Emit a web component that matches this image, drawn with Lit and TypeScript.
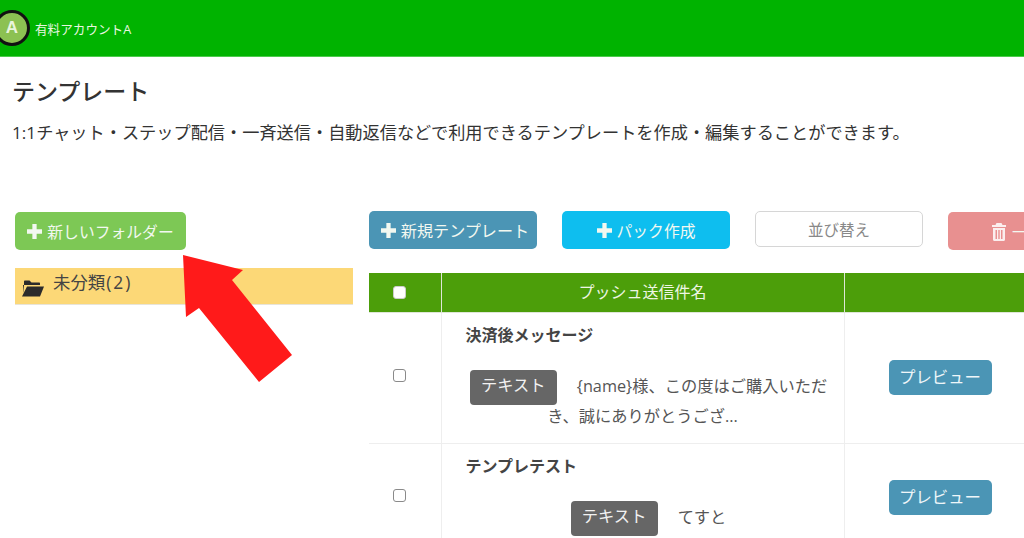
import { LitElement, html, css, svg } from "lit";
import { customElement } from "lit/decorators.js";

const plus = html`<svg class="plus" viewBox="0 0 14 14"><path d="M5 0h4v5h5v4H9v5H5V9H0V5h5z" fill="currentColor"/></svg>`;

@customElement("app-root")
export class AppRoot extends LitElement {
  static styles = css`
    :host { display: block; width: 1024px; height: 538px; overflow: hidden; position: relative; background: #fff;
      font-family: "Open Sans", "Noto Sans CJK JP", sans-serif; color: #444; }
    .top { height: 56px; background: #00b300; border-bottom: 1px solid #4ccb4c; display: flex; align-items: center; margin-left: -6px; gap: 5px; color: #e8f6e0; font-size: 12.6px; }
    .avatar { width: 30px; height: 30px; border-radius: 50%; background: #8cc152; border: 3px solid #111; color: #e9f4dc; font: bold 17px/30px "Liberation Sans", sans-serif; text-align: center; flex: none; }
    h1 { margin: 20px 0 0 12px; font-size: 23px; line-height: 28px; font-weight: 500; color: #333; }
    .desc { margin: 16px 0 0 12px; font-size: 17.2px; line-height: 24px; color: #333; white-space: nowrap; }
    .main { display: flex; margin: 67px 0 0 15px; gap: 16px; }
    .side { width: 338px; flex: none; }
    .btn { display: flex; align-items: center; justify-content: center; gap: 5px; box-sizing: border-box; border-radius: 5px; color: #f2f8f0; font-size: 15.8px; height: 38px; white-space: nowrap; flex: none; }
    .plus { width: 15px; height: 15px; flex: none; }
    .new-folder { width: 171px; background: #7dc855; }
    .folder { margin-top: 18px; height: 37px; background: #fcd877; border-bottom: 1px solid #e8e4d8; box-sizing: border-box; display: flex; align-items: center; font-size: 17.4px; padding: 0 0 9px 6px; gap: 8px; color: #444; }
    .folder svg { width: 24px; height: 20px; margin-top: 13px; flex: none; }
    .count { letter-spacing: 2px; margin-left: 1px; }
    .content { flex: 1; min-width: 0; }
    .tools { display: flex; gap: 25px; height: 38px; margin-top: -1px; align-items: flex-start; }
    .t1 { width: 168px; background: #4b95b5; font-size: 16.1px; padding-left: 4px; }
    .t2 { width: 168px; background: #0ebeef; }
    .t3 { width: 168px; height: 36px; background: #fff; border: 1px solid #d6d6d6; color: #888; font-size: 15.5px; }
    .t4 { width: 168px; background: #e89090; justify-content: flex-start; padding-left: 43px; margin-top: 1px; }
    .t4 svg { width: 16px; height: 19px; flex: none; }
    table { border-collapse: collapse; table-layout: fixed; width: 720px; margin-top: 24px; font-size: 16px; }
    th { background: #4c9e0a; color: #eef6e4; font-weight: 400; height: 39px; padding: 0 0 3px; border: 1px solid #dfe6d8; border-top: none; text-align: center; box-sizing: border-box; }
    th:first-child { border-left: none; }
    td { border: 1px solid #eee; padding: 0; vertical-align: top; }
    td:first-child { border-left: none; vertical-align: middle; }
    .c1 { width: 72px; } .c2 { width: 403px; }
    .check { display: block; width: 13px; height: 13px; box-sizing: border-box; border: 1px solid #8a8a8a; border-radius: 3px; background: #fff; margin: -5px 0 0 24px; }
    th .check { border-color: #ccc; margin-top: 3px; }
    .row1 td { height: 130px; } .row2 td { height: 108px; }
    .pvcell { vertical-align: middle; padding-left: 44px; }
    .title { font-weight: 700; line-height: 22px; color: #444; padding: 11px 0 0 24px; }
    .msg { margin-top: 26px; padding: 0 12px; text-align: center; line-height: 29px; color: #555; font-size: 16.25px; }
    .tag { display: inline-block; vertical-align: middle; width: 87px; height: 35px; background: #666; color: #f1f1f1; border-radius: 4px; line-height: 30px; font-size: 16.3px; margin: -3px 20px -3px 12px; text-align: center; }
    .pv { display: flex; align-items: center; justify-content: center; width: 103px; height: 35px; background: #4b95b5; color: #eef6f9; border-radius: 5px; font-size: 16.4px; padding-bottom: 4px; box-sizing: border-box; }
    .arrow { position: absolute; left: 0; top: 0; width: 1024px; height: 538px; pointer-events: none; }
  `;

  render() {
    return html`
      <div class="top"><div class="avatar">A</div><span>有料アカウントA</span></div>
      <h1>テンプレート</h1>
      <div class="desc">1:1チャット・ステップ配信・一斉送信・自動返信などで利用できるテンプレートを作成・編集することができます。</div>
      <div class="main">
        <div class="side">
          <div class="btn new-folder">${plus}新しいフォルダー</div>
          <div class="folder">
            <svg viewBox="0 0 24 20"><path d="M3 7V3.500C3 3 3.400 2.500 4 2.500h4.500l2 2H18c.6 0 1 .4 1 1V7H7L3 7zM6 8.500h17l-4 10H1z M2 7h1v9z" fill="#2b2b2b"/></svg>
            <span>未分類<span class="count">(2)</span></span>
          </div>
        </div>
        <div class="content">
          <div class="tools">
            <div class="btn t1">${plus}新規テンプレート</div>
            <div class="btn t2">${plus}パック作成</div>
            <div class="btn t3">並び替え</div>
            <div class="btn t4">
              <svg viewBox="0 0 16 19"><path d="M5.500 1h5l1 2H15v2H1V3h3.500zM2 6h12v11.500c0 .8-.6 1.500-1.400 1.500H3.400C2.600 19 2 18.300 2 17.500zM4.500 8v9H6V8zm2.800 0v9h1.400V8zM10 8v9h1.500V8z" fill="#fbeeee" fill-rule="evenodd"/></svg>
              一括削除
            </div>
          </div>
          <table>
            <colgroup><col class="c1" /><col class="c2" /><col /></colgroup>
            <thead><tr><th><span class="check"></span></th><th>プッシュ送信件名</th><th></th></tr></thead>
            <tbody>
              <tr class="row1">
                <td><span class="check"></span></td>
                <td><div class="title">決済後メッセージ</div>
                  <div class="msg"><span class="tag">テキスト</span>{name}様、この度はご購入いただき、誠にありがとうござ...</div></td>
                <td class="pvcell"><span class="pv">プレビュー</span></td>
              </tr>
              <tr class="row2">
                <td><span class="check"></span></td>
                <td><div class="title">テンプレテスト</div>
                  <div class="msg"><span class="tag">テキスト</span>てすと</div></td>
                <td class="pvcell"><span class="pv">プレビュー</span></td>
              </tr>
            </tbody>
          </table>
        </div>
      </div>
      <svg class="arrow" viewBox="0 0 1024 538">${svg`<polygon points="183,255 243,270 232,280 292,355 259,382 199,308 186,317" fill="#ff1a1a"/>`}</svg>
    `;
  }
}
